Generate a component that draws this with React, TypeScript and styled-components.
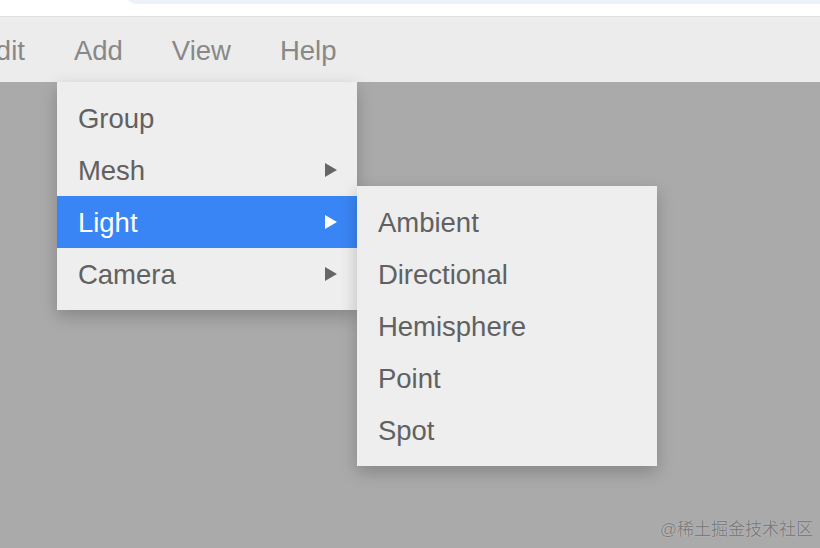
import React from 'react';
import styled, { createGlobalStyle } from 'styled-components';

const GlobalStyle = createGlobalStyle`
  body {
    margin: 0;
    background: #aaaaaa;
    font-family: "Liberation Sans", Arial, Helvetica, sans-serif;
  }
`;

const Page = styled.div`
  position: relative;
  height: 548px;
  overflow: hidden;
  background: #aaaaaa;
`;

const TopStrip = styled.div`
  display: flex;
  height: 16px;
  padding-left: 125px;
  background: #ffffff;
  border-bottom: 1px solid #e0e0e0;
  overflow: hidden;
`;

const AddressBar = styled.div`
  flex: 1;
  height: 24px;
  margin-top: -20px;
  margin-right: -30px;
  border-radius: 22px;
  background: #edf2fa;
`;

const MenuBar = styled.div`
  display: flex;
  height: 65px;
  margin-left: -47px;
  background: #ececec;
`;

const MenuTitle = styled.div`
  position: relative;
  display: flex;
  align-items: center;
  padding: 3px 24.5px 0;
  font-size: 27.5px;
  color: #888888;
`;

const Dropdown = styled.div<{ $nested?: boolean }>`
  position: absolute;
  top: ${(p) => (p.$nested ? '-10px' : '100%')};
  left: ${(p) => (p.$nested ? '100%' : '7.5px')};
  width: 300px;
  padding: 10px 0;
  background: #eeeeee;
  box-shadow: 0 6px 16px rgba(0, 0, 0, 0.22);
  z-index: 1;
`;

const Row = styled.div<{ $active?: boolean }>`
  position: relative;
  box-sizing: border-box;
  display: flex;
  align-items: center;
  justify-content: space-between;
  height: 52px;
  padding: 2px 20px 0 21px;
  font-size: 27.5px;
  color: ${(p) => (p.$active ? '#ffffff' : '#616161')};
  background: ${(p) => (p.$active ? '#3a85f5' : 'transparent')};
`;

const Arrow = styled.span<{ $active?: boolean }>`
  width: 0;
  height: 0;
  margin-top: -2px;
  border-top: 7px solid transparent;
  border-bottom: 7px solid transparent;
  border-left: 12px solid ${(p) => (p.$active ? '#ffffff' : '#666666')};
`;

const Watermark = styled.div`
  position: absolute;
  right: 7px;
  bottom: 8px;
  font-size: 17px;
  color: #7e7e7e;
  text-shadow: 0 0 1px rgba(255, 255, 255, 0.6);
  font-family: "Liberation Sans", "Noto Sans CJK SC", sans-serif;
`;

const addItems = [
  { label: 'Group', sub: false },
  { label: 'Mesh', sub: true },
  { label: 'Light', sub: true },
  { label: 'Camera', sub: true },
];

const lights = ['Ambient', 'Directional', 'Hemisphere', 'Point', 'Spot'];

export default function App() {
  return (
    <Page>
      <GlobalStyle />
      <TopStrip>
        <AddressBar />
      </TopStrip>
      <MenuBar>
        <MenuTitle>Edit</MenuTitle>
        <MenuTitle>
          Add
          <Dropdown>
            {addItems.map((item) => {
              const active = item.label === 'Light';
              return (
                <Row key={item.label} $active={active}>
                  <span>{item.label}</span>
                  {item.sub && <Arrow $active={active} />}
                  {active && (
                    <Dropdown $nested>
                      {lights.map((l) => (
                        <Row key={l}>{l}</Row>
                      ))}
                    </Dropdown>
                  )}
                </Row>
              );
            })}
          </Dropdown>
        </MenuTitle>
        <MenuTitle>View</MenuTitle>
        <MenuTitle>Help</MenuTitle>
      </MenuBar>
      <Watermark>@稀土掘金技术社区</Watermark>
    </Page>
  );
}
